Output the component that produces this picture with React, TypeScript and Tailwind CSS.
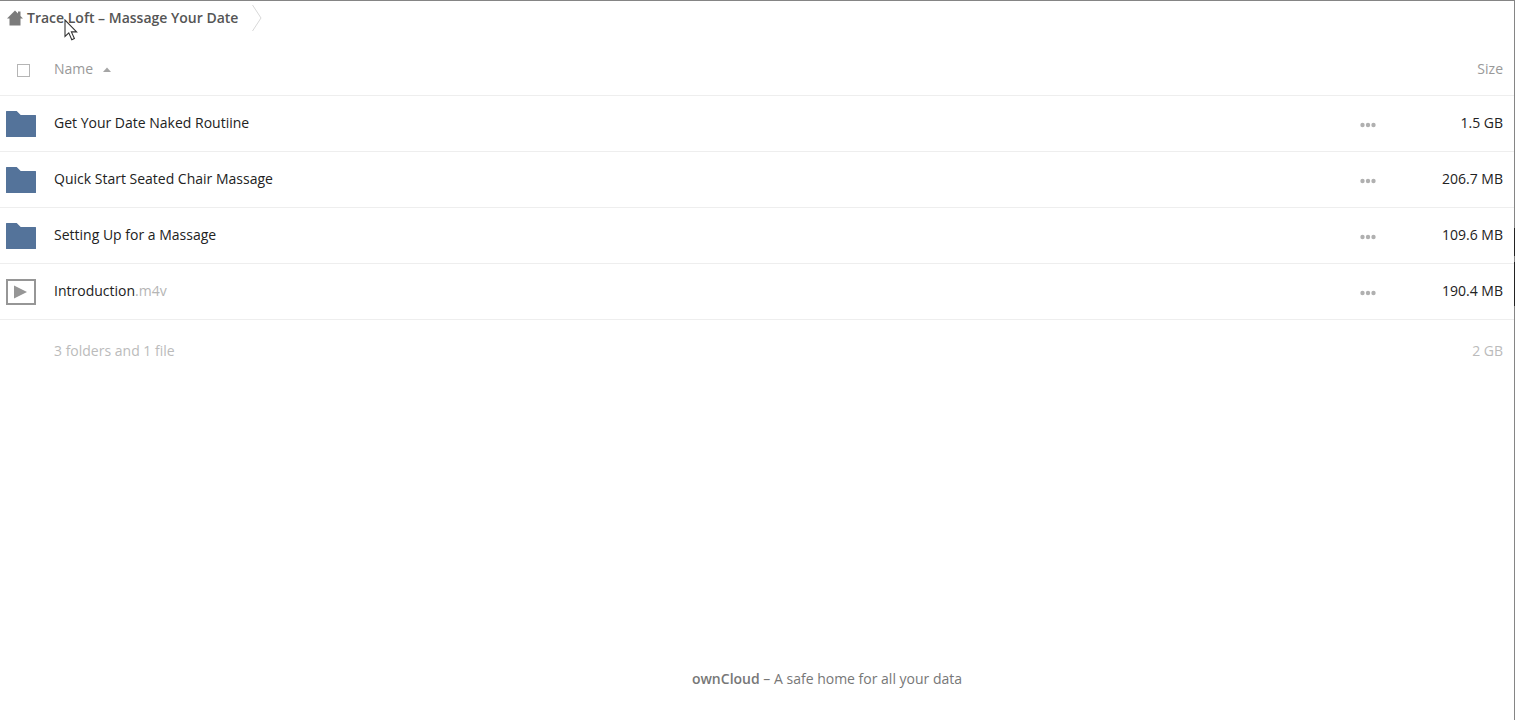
import { useState } from "react";

const files = [
  { name: "Get Your Date Naked Routiine", ext: "", size: "1.5 GB", type: "folder" },
  { name: "Quick Start Seated Chair Massage", ext: "", size: "206.7 MB", type: "folder" },
  { name: "Setting Up for a Massage", ext: "", size: "109.6 MB", type: "folder" },
  { name: "Introduction", ext: ".m4v", size: "190.4 MB", type: "video" },
];

function HomeIcon() {
  return (
    <svg className="h-4 w-4" viewBox="0 0 16 16" fill="#7b7b7b" aria-hidden="true">
      <path d="M8 .5 0 8.5h2.5V15.5h11V8.5H16l-2.5-2.5V1.5H11v2z" />
    </svg>
  );
}

function FolderIcon() {
  return (
    <svg className="h-8 w-8" viewBox="0 0 32 32" fill="#54739a" aria-hidden="true">
      <path d="M1.5 3h10.2l4 4H30.5q.5 0 .5.5v21q0 .5-.5.5h-29q-.5 0-.5-.5v-25q0-.5.5-.5z" />
    </svg>
  );
}

function VideoIcon() {
  return (
    <svg className="h-8 w-8" viewBox="0 0 32 32" aria-hidden="true">
      <rect x="2" y="4" width="28" height="24" fill="none" stroke="#969696" strokeWidth="2" />
      <path d="M9 9.5v13L22 16z" fill="#969696" />
    </svg>
  );
}

function DotsIcon() {
  return (
    <svg className="h-4 w-4" viewBox="0 0 16 16" fill="#b0b0b0" aria-hidden="true">
      <circle cx="2.5" cy="8" r="2.2" />
      <circle cx="8" cy="8" r="2.2" />
      <circle cx="13.5" cy="8" r="2.2" />
    </svg>
  );
}

function Pointer() {
  return (
    <svg
      className="pointer-events-none absolute top-[18px] left-16 h-[22px] w-[14px]"
      viewBox="0 0 14 22"
      aria-hidden="true"
    >
      <path
        d="M1 1v16.5l3.8-3.6 3 6.8 2.6-1.2-3-6.6h5.2z"
        fill="#fff"
        stroke="#333"
        strokeWidth="1.1"
      />
    </svg>
  );
}

export default function App() {
  const [allSelected, setAllSelected] = useState(false);

  return (
    <div className="relative flex min-h-screen flex-col border-t border-r border-[#858585] bg-white font-['Open_Sans',sans-serif] text-sm text-[#222]">
      <nav aria-label="Breadcrumb" className="flex h-[34px] items-center">
        <a href="#" className="flex items-center gap-1 pl-[7px] font-semibold text-[#555]">
          <HomeIcon />
          <span>Trace Loft – Massage Your Date</span>
        </a>
        <svg
          className="ml-[13px] h-7 w-[11px]"
          viewBox="0 0 11 28"
          fill="none"
          stroke="#d8d8d8"
          aria-hidden="true"
        >
          <path d="M1.5 1 10 14 1.5 27" />
        </svg>
      </nav>
      <Pointer />

      <table className="w-full">
        <thead>
          <tr className="h-[60px] border-b border-[#eee] text-[#999]">
            <th className="w-[54px] pt-2 pl-[17px] text-left">
              <input
                type="checkbox"
                aria-label="Select all"
                checked={allSelected}
                onChange={() => setAllSelected(!allSelected)}
                className="mt-1 block h-[13px] w-[13px] appearance-none border border-[#b5b5b5] bg-white checked:bg-[#b5b5b5]"
              />
            </th>
            <th className="pt-2 text-left font-normal">
              <button type="button" className="flex items-center gap-[10px]">
                Name
                <svg className="h-2 w-2" viewBox="0 0 8 8" fill="#a5a5a5" aria-hidden="true">
                  <path d="M4 2.5 8 7H0z" />
                </svg>
              </button>
            </th>
            <th className="w-10" />
            <th className="w-[114px] pt-2 pr-[11px] text-right font-normal">Size</th>
          </tr>
        </thead>
        <tbody>
          {files.map((file) => (
            <tr key={file.name} className="h-14 border-b border-[#eee]">
              <td className="pt-[2px] pl-[5px]">
                {file.type === "folder" ? <FolderIcon /> : <VideoIcon />}
              </td>
              <td>
                <a href="#">
                  {file.name}
                  <span className="text-[#b5b5b5]">{file.ext}</span>
                </a>
              </td>
              <td>
                <button type="button" aria-label="Actions" className="block pt-[3px]">
                  <DotsIcon />
                </button>
              </td>
              <td className="pr-[11px] text-right">{file.size}</td>
            </tr>
          ))}
        </tbody>
        <tfoot>
          <tr className="h-16 text-[#bbb]">
            <td />
            <td>3 folders and 1 file</td>
            <td />
            <td className="pr-[11px] text-right">2 GB</td>
          </tr>
        </tfoot>
      </table>

      <footer className="mt-auto pb-[31px] pl-[140px] text-center text-[#777]">
        <a href="#" className="font-semibold">
          ownCloud
        </a>{" "}
        – A safe home for all your data
      </footer>

      {/* dark stretches on the window's right edge */}
      <div className="absolute top-[227px] -right-px h-7 w-px bg-[#222]" />
      <div className="absolute top-[261px] -right-px h-11 w-px bg-[#222]" />
    </div>
  );
}
